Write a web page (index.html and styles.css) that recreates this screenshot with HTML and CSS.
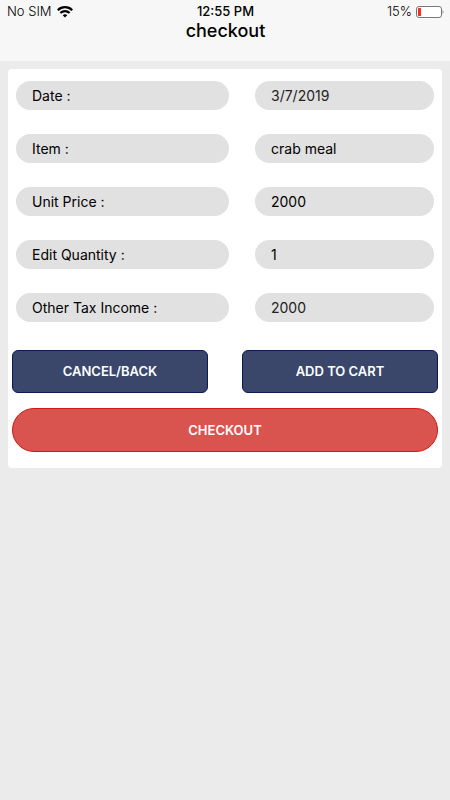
FILE: index.html
```html
<!DOCTYPE html>
<html lang="en">
<head>
<meta charset="utf-8">
<meta name="viewport" content="width=device-width, initial-scale=1">
<title>checkout</title>
<link rel="stylesheet" href="styles.css">
</head>
<body>
<header class="header">
  <div class="status">
    <div class="carrier">
      <span>No SIM</span>
      <svg class="wifi" viewBox="0 0 16 12" aria-hidden="true">
        <path d="M.8 4.200a10.200 10.200 0 0 1 14.400 0M3.400 7a6.500 6.500 0 0 1 9.200 0" fill="none" stroke="currentColor" stroke-width="2.200"/>
        <path d="M8 11.600 5.700 9.300a3.300 3.300 0 0 1 4.600 0z" fill="currentColor"/>
      </svg>
    </div>
    <time class="clock">12:55 PM</time>
    <div class="power">
      <span>15%</span>
      <svg class="battery" viewBox="0 0 28 12" aria-hidden="true">
        <rect x="0.5" y="0.5" width="25" height="11" rx="2.5" fill="#fff" stroke="#777"/>
        <rect x="2" y="2" width="3" height="8" rx="0.5" fill="#ff2a1f"/>
        <path d="M26.500 4q2 2 0 4z" fill="#888"/>
      </svg>
    </div>
  </div>
  <h1 class="title">checkout</h1>
</header>
<main class="page">
  <form class="card">
    <div class="fields">
      <label class="pill" for="date">Date :</label>
      <input class="pill muted" id="date" type="text" value="3/7/2019" readonly>
      <label class="pill" for="item">Item :</label>
      <input class="pill" id="item" type="text" value="crab meal">
      <label class="pill" for="price">Unit Price :</label>
      <input class="pill" id="price" type="text" value="2000">
      <label class="pill" for="quantity">Edit Quantity :</label>
      <input class="pill" id="quantity" type="text" value="1">
      <label class="pill" for="tax">Other Tax Income :</label>
      <input class="pill muted" id="tax" type="text" value="2000" readonly>
    </div>
    <div class="actions">
      <button class="button" type="button">CANCEL/BACK</button>
      <button class="button" type="button">ADD TO CART</button>
    </div>
    <button class="button checkout" type="button">CHECKOUT</button>
  </form>
</main>
</body>
</html>
```
FILE: styles.css
```css
* {
  box-sizing: border-box;
}

body {
  margin: 0;
  min-height: 100vh;
  background: #ebebeb;
  color: #000;
  font-family: Inter, "Liberation Sans", sans-serif;
}

.header {
  padding: 3px 6px 20px 7px;
  background: #f7f7f7;
}

.status {
  display: grid;
  grid-template-columns: 1fr auto 1fr;
  align-items: center;
  font-size: 13px;
  line-height: 17px;
}

.carrier,
.power {
  display: flex;
  align-items: center;
  gap: 5px;
  color: #000;
  font-weight: 300;
}

.power {
  justify-content: flex-end;
  gap: 4px;
}

.wifi {
  width: 16px;
  height: 12px;
}

.battery {
  width: 28px;
  height: 12px;
}

.clock {
  font-weight: 500;
}

.title {
  margin: 0;
  font-size: 18px;
  font-weight: 500;
  line-height: 21px;
  text-align: center;
}

.page {
  padding: 8px;
}

.card {
  padding: 12px 4px 16px;
  border-radius: 4px;
  background: #fff;
}

.fields {
  display: grid;
  grid-template-columns: 213fr 179fr;
  gap: 24px 26px;
  padding: 0 4px;
}

.pill {
  min-width: 0;
  width: 100%;
  height: 29px;
  margin: 0;
  padding: 0 16px;
  border: 0;
  border-radius: 15px;
  background: #e1e1e1;
  color: #000;
  font: 400 14px/29px Inter, "Liberation Sans", sans-serif;
}

.muted {
  color: #222;
}

.actions {
  display: grid;
  grid-template-columns: 1fr 1fr;
  gap: 34px;
  margin: 28px 0 15px;
}

.button {
  height: 43px;
  padding: 0;
  border: 1px solid #0b1a52;
  border-radius: 6px;
  background: #3a476b;
  color: #fff;
  font: 600 13px/17px Inter, "Liberation Sans", sans-serif;
}

.checkout {
  display: block;
  width: 100%;
  height: 44px;
  border-color: #d01a14;
  border-radius: 22px;
  background: #d9534f;
}
```
